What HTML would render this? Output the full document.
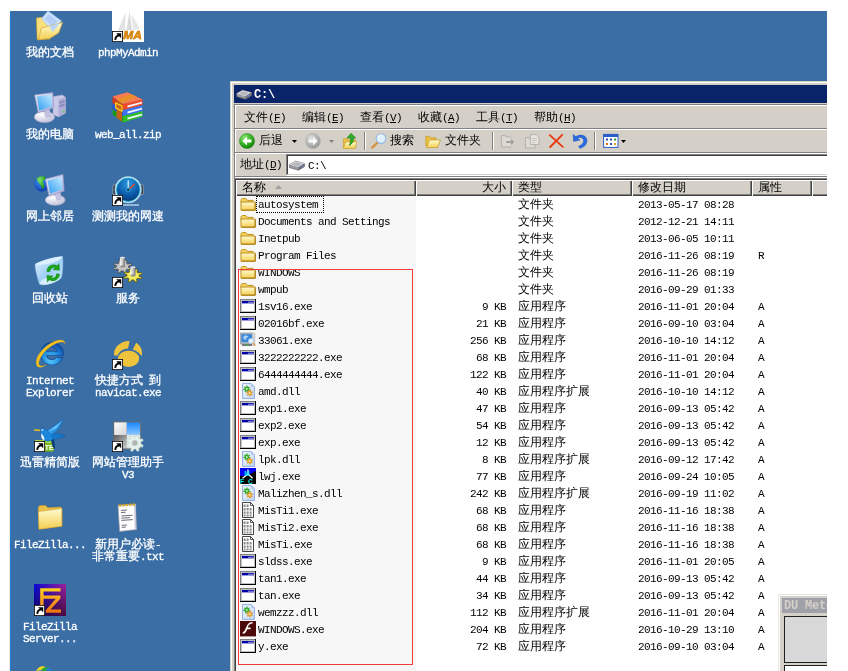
<!DOCTYPE html>
<html lang="zh-CN"><head><meta charset="utf-8"><title>C:\</title><style>
html,body{margin:0;padding:0;background:#fff}
body{width:848px;height:671px;overflow:hidden;position:relative;font-family:"Liberation Mono","WenQuanYi Zen Hei",monospace;font-size:12px;line-height:13px;color:#000}
.l{font-size:11px;letter-spacing:-0.6px}
#desk{position:absolute;left:10px;top:11px;width:817px;height:660px;background:#3a6ea5;overflow:hidden}
#o{position:absolute;left:-10px;top:-11px;width:848px;height:671px;will-change:transform}
#o div,#o svg,#o span.a{position:absolute}
.di{width:32px;height:32px}
.dl{width:90px;text-align:center;color:#fff;white-space:nowrap;-webkit-text-stroke:.3px #fff}
#win{left:230px;top:81px;width:640px;height:640px;background:#d4d0c8}
.ln{height:1px;left:0;right:0}
.t{white-space:nowrap;height:13px}
.hd{top:180px;height:16px;background:#d4d0c8;box-shadow:inset 1px 1px 0 #fff,inset -1px -1px 0 #404040,inset -2px -2px 0 #808080}
.r{left:236px;width:600px;height:17px}
.r div{top:3px;white-space:nowrap;height:13px}
.r svg{left:4px;top:0;width:16px;height:16px}
.n{left:22px}.s{right:330px;text-align:right}.y{left:282px}.d{left:402px}.at{left:522px}
.mi{top:112px;height:13px;white-space:nowrap}
.tb{top:135px;height:13px;white-space:nowrap}
u{text-decoration:underline}
</style></head>
<body><div style="position:absolute;left:9px;top:12px;width:1px;height:659px;background:#f3ebe4"></div><div id="desk"><div id="o">
<svg width="0" height="0" style="left:0;top:0"><defs>
<linearGradient id="gFo" x1="0" y1="0" x2="0" y2="1"><stop offset="0" stop-color="#fffbd2"/><stop offset="1" stop-color="#f4cf52"/></linearGradient>
<linearGradient id="gSc" x1="0" y1="1" x2="1" y2="0"><stop offset="0" stop-color="#2f9df2"/><stop offset="1" stop-color="#c4eaff"/></linearGradient>
<linearGradient id="gFr" x1="0" y1="0" x2="1" y2="1"><stop offset="0" stop-color="#e6e6f6"/><stop offset="1" stop-color="#a9a9d4"/></linearGradient>
<radialGradient id="gBa" cx="0.35" cy="0.3" r="0.8"><stop offset="0" stop-color="#ffffff"/><stop offset="1" stop-color="#b9b9d6"/></radialGradient>
<radialGradient id="gGl" cx="0.4" cy="0.3" r="0.8"><stop offset="0" stop-color="#3a9bf0"/><stop offset="1" stop-color="#0a2ea8"/></radialGradient>
<radialGradient id="gGr" cx="0.35" cy="0.3" r="0.7"><stop offset="0" stop-color="#7fe06a"/><stop offset="1" stop-color="#17920f"/></radialGradient>
<radialGradient id="gGy" cx="0.35" cy="0.3" r="0.7"><stop offset="0" stop-color="#f4f4f4"/><stop offset="1" stop-color="#a4a4a4"/></radialGradient>
<radialGradient id="gCl" cx="0.5" cy="0.25" r="0.8"><stop offset="0" stop-color="#2d9be0"/><stop offset="0.6" stop-color="#0b5aa8"/><stop offset="1" stop-color="#06356e"/></radialGradient>
<radialGradient id="gIe" cx="0.45" cy="0.75" r="0.8"><stop offset="0" stop-color="#5fd2ff"/><stop offset="0.5" stop-color="#1c86dc"/><stop offset="1" stop-color="#0c3c9c"/></radialGradient>
<linearGradient id="gBn" x1="0" y1="0" x2="1" y2="1"><stop offset="0" stop-color="#e4f3ff"/><stop offset="0.5" stop-color="#9fd0f6"/><stop offset="1" stop-color="#c8e6fb"/></linearGradient>
<linearGradient id="gFzH" x1="0" y1="0" x2="1" y2="0"><stop offset="0" stop-color="#0a0ad8"/><stop offset="1" stop-color="#a0209c"/></linearGradient>
<linearGradient id="gFzV" x1="0" y1="0" x2="0" y2="1"><stop offset="0" stop-color="#000" stop-opacity="0"/><stop offset="1" stop-color="#200010" stop-opacity="0.65"/></linearGradient>
<linearGradient id="gFzT" x1="0" y1="0" x2="0" y2="1"><stop offset="0" stop-color="#ffd020"/><stop offset="1" stop-color="#f07010"/></linearGradient>
<linearGradient id="gCy" x1="0" y1="0" x2="1" y2="0"><stop offset="0" stop-color="#fafafa"/><stop offset="0.5" stop-color="#c8c8c8"/><stop offset="1" stop-color="#707070"/></linearGradient>
<linearGradient id="gWb" x1="0" y1="0" x2="0" y2="1"><stop offset="0" stop-color="#1888ff"/><stop offset="1" stop-color="#8cc8ff"/></linearGradient>
<linearGradient id="gWg" x1="0" y1="0" x2="1" y2="1"><stop offset="0" stop-color="#5c5c5c"/><stop offset="1" stop-color="#d0d0d0"/></linearGradient>
<linearGradient id="gWw" x1="0" y1="0" x2="1" y2="1"><stop offset="0" stop-color="#ffffff"/><stop offset="1" stop-color="#d2d2d2"/></linearGradient>
<linearGradient id="gPg" x1="0" y1="0" x2="1" y2="1"><stop offset="0" stop-color="#f4f9ff"/><stop offset="1" stop-color="#c4d8f8"/></linearGradient>
<radialGradient id="gBk" cx="0.35" cy="0.3" r="0.75"><stop offset="0" stop-color="#8fe87a"/><stop offset="0.6" stop-color="#2fae1f"/><stop offset="1" stop-color="#157a0c"/></radialGradient>
<radialGradient id="gFw" cx="0.35" cy="0.3" r="0.75"><stop offset="0" stop-color="#e0e0e0"/><stop offset="1" stop-color="#969696"/></radialGradient>
</defs></svg>
<div style="left:10px;top:11px;width:1px;height:660px;background:#1e7ed6"></div>
<svg class="di" style="left:34px;top:10px" viewBox="0 0 32 32"><path d="M2.5 8.2L7 7.2L11.5 9.5L16 9.5L16 29L3.2 29.6Z" fill="#f9de7c" stroke="#d9a42c" stroke-width=".7"/><path d="M14 1L27.5 11L19 21.5L7.5 8.5Z" fill="#cfe2fb" stroke="#9bbdf0" stroke-width=".6"/><path d="M14.5 4L23.5 11L18.5 17L10.5 9Z" fill="#a9c9f6" opacity=".8"/><path d="M7.3 18L28.6 12.5L24.6 23L16.5 28L4.3 30Z" fill="url(#gFo)" stroke="#d3a534" stroke-width=".7"/><path d="M15.5 16L26 13.3L18.5 22Z" fill="#b8d6f8"/></svg>
<div class="dl" style="left:5px;top:47px">我的文档</div>
<svg class="di" style="left:112px;top:10px" viewBox="0 0 32 32"><rect width="32" height="32" fill="#fff"/><path d="M13.5 2L6 20.5L13 20.5Z" fill="#e3e3e3"/><path d="M17.5 1L14.5 20.5L20 20Z" fill="#dadada"/><path d="M19.5 4L21 20L28 19Z" fill="#e6e6e6"/><text x="11.3" y="28.6" font-family="Liberation Sans,sans-serif" font-weight="bold" font-style="italic" font-size="11" textLength="18.5" lengthAdjust="spacingAndGlyphs" fill="#f39a00" stroke="#b56500" stroke-width=".5">MA</text><rect x="0" y="21" width="11" height="11" fill="#000"/><rect x=".8" y="21.8" width="9.4" height="9.4" fill="#fff"/><path d="M3.4 29.8C3.2 27.4 4.6 25.8 7 25.6" fill="none" stroke="#000" stroke-width="2"/><path d="M4.2 23.2H9.2V28.2Z" fill="#000"/></svg>
<div class="dl" style="left:83px;top:47px"><span class="l">phpMyAdmin</span></div>
<svg class="di" style="left:34px;top:92px" viewBox="0 0 32 32"><ellipse cx="10.5" cy="25" rx="10.3" ry="5.6" fill="url(#gBa)" stroke="#a9a9c9" stroke-width=".5"/><path d="M19 4.5L28.5 3L31.6 5.2L31.6 21L24.5 25L19 22.5Z" fill="#c9c9e6" stroke="#9a9ac6" stroke-width=".5"/><path d="M24.5 7.5L31.6 5.2L31.6 21L24.5 25Z" fill="#aeaed6"/><path d="M25.5 9.5L30.6 8L30.6 10.5L25.5 12ZM25.5 13L30.6 11.5L30.6 14L25.5 15.5Z" fill="#8d8dc0"/><circle cx="29.8" cy="19.6" r=".9" fill="#4be024"/><path d="M10 17.5L15.5 16L16.5 24.5L12 25.5Z" fill="#c4c4e2" stroke="#a2a2ca" stroke-width=".4"/><path d="M.6 3L18.8 .6L19.8 15.8L4.2 20.6Z" fill="url(#gFr)" stroke="#9c9cc8" stroke-width=".6"/><path d="M3 4.6L17.4 2.6L18.2 14.4L5.2 18.4Z" fill="url(#gSc)"/></svg>
<div class="dl" style="left:5px;top:129px">我的电脑</div>
<svg class="di" style="left:112px;top:92px" viewBox="0 0 32 32"><path d="M.5 17L11 24L11 30.5L.5 22.5Z" fill="#1c9a18"/><path d="M11 24L30.6 19L30.6 24.6L11 30.5Z" fill="#2fc028"/><path d="M15.5 25.6L30 21.7L30 23.4L15.5 27.6Z" fill="#eef4ff"/><path d="M.5 11L11 18L11 24L.5 17Z" fill="#2a55d0"/><path d="M11 18L30.6 13L30.6 19L11 24Z" fill="#3f73ee"/><path d="M15.5 19.6L30 15.7L30 17.4L15.5 21.6Z" fill="#eef4ff"/><path d="M.5 4.6L11 12L11 18L.5 11Z" fill="#d23a1c"/><path d="M11 12L30.6 7.6L30.6 13L11 18Z" fill="#f04a26"/><path d="M15.5 13.6L30 9.8L30 11.5L15.5 15.6Z" fill="#eef4ff"/><path d="M.5 4.6L15.5 .3L30.6 7.6L11 12Z" fill="#fb7a52"/><path d="M4.5 7.2L10 11.2L10 29.8L4.5 25.6Z" fill="#c0601c"/><path d="M4.5 7.2L19 2.2L24.5 4.4L10 11.2Z" fill="#e8902c"/><path d="M3.6 11L10 14L10 19.2L3.6 15.8Z" fill="#c8641c" stroke="#ffd21e" stroke-width="1.2"/></svg>
<div class="dl" style="left:83px;top:129px"><span class="l">web_all.zip</span></div>
<svg class="di" style="left:34px;top:174px" viewBox="0 0 32 32"><circle cx="7.8" cy="10" r="7.6" fill="url(#gGl)"/><path d="M2.5 4.5C5 1.8 9.5 1.6 12 3.2C11 6 9.2 6.6 8.6 8.6C10.4 10.2 11 12.6 9.2 15.6C8.4 13.4 7 12.6 6.4 10.4C4.6 9 3 7 2.5 4.5Z" fill="url(#gGr)"/><ellipse cx="21.2" cy="26" rx="10" ry="5.4" fill="url(#gBa)" stroke="#a9a9c9" stroke-width=".5"/><path d="M21 19.5L26.5 18L27 25L23.2 26.4Z" fill="#c4c4e2" stroke="#a2a2ca" stroke-width=".4"/><path d="M11.4 5.2L29 .4L30.2 17L15 22Z" fill="url(#gFr)" stroke="#9c9cc8" stroke-width=".6"/><path d="M13.6 6.8L27.6 2.8L28.6 15.6L16.2 19.6Z" fill="url(#gSc)"/></svg>
<div class="dl" style="left:5px;top:211px">网上邻居</div>
<svg class="di" style="left:112px;top:174px" viewBox="0 0 32 32"><rect x="9" y="30.4" width="18" height="1.2" fill="#cfe4f4"/><rect x=".8" y="11" width="3.6" height="9.5" rx="1.2" fill="#3c4650" stroke="#c4ccd4" stroke-width=".5"/><rect x="28" y="11" width="3.6" height="9.5" rx="1.2" fill="#3c4650" stroke="#c4ccd4" stroke-width=".5"/><circle cx="16.2" cy="15.7" r="13.2" fill="#d8eefa" stroke="#9cc8e4" stroke-width=".6"/><circle cx="16.2" cy="15.7" r="11.7" fill="url(#gCl)" stroke="#18b4d8" stroke-width=".8"/><path d="M16.2 15.7L16.2 6.2" stroke="#fff" stroke-width="1"/><path d="M16.2 15.7L22.8 10" stroke="#f2421c" stroke-width="1.3"/><circle cx="16.2" cy="15.7" r="1.7" fill="#102840" stroke="#38c8ff" stroke-width=".8"/><rect x="0" y="21" width="11" height="11" fill="#000"/><rect x=".8" y="21.8" width="9.4" height="9.4" fill="#fff"/><path d="M3.4 29.8C3.2 27.4 4.6 25.8 7 25.6" fill="none" stroke="#000" stroke-width="2"/><path d="M4.2 23.2H9.2V28.2Z" fill="#000"/></svg>
<div class="dl" style="left:83px;top:211px">测测我的网速</div>
<svg class="di" style="left:34px;top:256px" viewBox="0 0 32 32"><path d="M1 8.2C6 5.6 20 .6 28.6 .6C29.4 6 28.6 17 27.6 21C26 25.6 12 30 5.6 28.6C3.6 23 1.2 14 1 8.2Z" fill="url(#gBn)" stroke="#8ab4d8" stroke-width=".6"/><path d="M1 8.2C6 5.6 20 .6 28.6 .6C27 5.6 9 10.6 1 8.2Z" fill="#def0ff"/><ellipse cx="15.5" cy="24.4" rx="10" ry="3.4" fill="#e2f2ff" opacity=".8" transform="rotate(-16 15.5 24.4)"/><g transform="translate(19.2 16.8) scale(1.3) translate(-19.1 -16.6)"><path d="M14.2 15.6A5.2 5.2 0 0 1 22.2 11.2L23.6 9.4L24 14.6L19 14.2L20.6 12.8A3 3 0 0 0 16.6 15.8ZM24 17.6A5.2 5.2 0 0 1 16 22L14.6 23.8L14.2 18.6L19.2 19L17.6 20.4A3 3 0 0 0 21.6 17.4Z" fill="#1aa41a" stroke="#0c7c0c" stroke-width=".3"/></g></svg>
<div class="dl" style="left:5px;top:293px">回收站</div>
<svg class="di" style="left:112px;top:256px" viewBox="0 0 32 32"><path d="M16.58 11.39L19.43 12.61L18.50 14.06L15.35 13.28L13.93 14.22L14.74 16.54L12.66 17.09L11.21 14.93L9.27 14.88L7.56 16.93L5.56 16.26L6.64 14.00L5.33 12.97L2.11 13.55L1.35 12.06L4.34 11.01L4.42 9.61L1.57 8.39L2.50 6.94L5.65 7.72L7.07 6.78L6.26 4.46L8.34 3.91L9.79 6.07L11.73 6.12L13.44 4.07L15.44 4.74L14.36 7.00L15.67 8.03L18.89 7.45L19.65 8.94L16.66 9.99Z" fill="#c4c4c4" stroke="#484848" stroke-width="0.8"/><rect x="8" y="1.6" width="5" height="9" fill="url(#gCy)"/><ellipse cx="10.5" cy="1.8" rx="2.5" ry="1" fill="#f0f0f0" stroke="#909090" stroke-width=".3"/><ellipse cx="10.5" cy="10.6" rx="2.5" ry="1" fill="#8c8c8c"/><path d="M27.08 20.39L29.93 21.61L29.00 23.06L25.85 22.28L24.43 23.22L25.24 25.54L23.16 26.09L21.71 23.93L19.77 23.88L18.06 25.93L16.06 25.26L17.14 23.00L15.83 21.97L12.61 22.55L11.85 21.06L14.84 20.01L14.92 18.61L12.07 17.39L13.00 15.94L16.15 16.72L17.57 15.78L16.76 13.46L18.84 12.91L20.29 15.07L22.23 15.12L23.94 13.07L25.94 13.74L24.86 16.00L26.17 17.03L29.39 16.45L30.15 17.94L27.16 18.99Z" fill="#f2ec5c" stroke="#5c5400" stroke-width="0.8"/><rect x="18.5" y="11" width="5" height="8.6" fill="url(#gCy)"/><ellipse cx="21" cy="11.2" rx="2.5" ry="1" fill="#f0f0f0" stroke="#909090" stroke-width=".3"/><ellipse cx="21" cy="19.6" rx="2.5" ry="1" fill="#8c8c8c"/><rect x="0" y="21" width="11" height="11" fill="#000"/><rect x=".8" y="21.8" width="9.4" height="9.4" fill="#fff"/><path d="M3.4 29.8C3.2 27.4 4.6 25.8 7 25.6" fill="none" stroke="#000" stroke-width="2"/><path d="M4.2 23.2H9.2V28.2Z" fill="#000"/></svg>
<div class="dl" style="left:83px;top:293px">服务</div>
<svg class="di" style="left:34px;top:338px" viewBox="0 0 32 32"><path d="M17.9 4.2A11.5 11.5 0 1 0 28.9 19.4L22.6 19.4A5.6 5.6 0 0 1 12.4 17.4L29.3 17.4A11.5 11.5 0 0 0 17.9 4.2ZM12.4 13.2A5.6 5.6 0 0 1 23.2 13.2Z" fill="url(#gIe)" stroke="#0a2a78" stroke-width=".5"/><path d="M3.2 28.2C-1 22 8 8 21 3.2C27 1 31.6 2 30.8 6.2C31 3.6 27 3.4 22 5.6C11 10.4 3.6 21.6 5 26.6C5.6 28.6 8.6 28.4 12.6 26.4C8.6 29.4 4.8 30.2 3.2 28.2Z" fill="#f6c21c" stroke="#d89a0c" stroke-width=".3"/></svg>
<div class="dl" style="left:5px;top:375px"><span class="l">Internet</span></div>
<div class="dl" style="left:5px;top:387px"><span class="l">Explorer</span></div>
<svg class="di" style="left:112px;top:338px" viewBox="0 0 32 32"><path d="M2.2 17.4C1 10 8 2.8 17.6 3L16 10.4C11 10.6 7.4 13 5.6 17.6Z" fill="#f0c33c"/><path d="M24.2 4.8C28.6 7.6 31 12.6 29.6 18.2C27.6 15 25 13 20.8 11.6Z" fill="#f0c33c"/><ellipse cx="16.6" cy="20.8" rx="10.6" ry="8.1" fill="#f0c33c"/><rect x="0" y="21" width="11" height="11" fill="#000"/><rect x=".8" y="21.8" width="9.4" height="9.4" fill="#fff"/><path d="M3.4 29.8C3.2 27.4 4.6 25.8 7 25.6" fill="none" stroke="#000" stroke-width="2"/><path d="M4.2 23.2H9.2V28.2Z" fill="#000"/></svg>
<div class="dl" style="left:83px;top:375px">快捷方式<span class="l">&nbsp;</span>到</div>
<div class="dl" style="left:83px;top:387px"><span class="l">navicat.exe</span></div>
<svg class="di" style="left:34px;top:420px" viewBox="0 0 32 32"><rect x=".6" y="20" width="19" height="11.4" rx="1.5" fill="#78b81c"/><rect x=".6" y="20" width="19" height="3" rx="1.5" fill="#a4d840"/><text x="10.8" y="29.6" font-family="Liberation Sans,sans-serif" font-weight="bold" font-size="7" fill="#fff">TE</text><path d="M16.5 18L20 18.6L21.2 29.4L18.4 26Z" fill="#0c3c78"/><path d="M-.2 9.3L6.6 9.8L6.6 11.2L-.2 10.5Z" fill="#f4cc30" stroke="#c89c10" stroke-width=".3"/><path d="M15 14L24 13.2L31.6 16.6L22.4 18.8L17 19.4Z" fill="#1478cc" stroke="#0c549c" stroke-width=".4"/><path d="M10.5 12.5L29.6 -.6L24.6 8.4L17 15.4Z" fill="#2c98e8" stroke="#0c5cb0" stroke-width=".4"/><path d="M13 12.5L28 .8L22 8.6Z" fill="#6cc0fa"/><path d="M6.2 11.4C6 8.6 8.6 7.4 10.6 8.4C12.6 9.6 14.4 11.6 16 13.4L19.4 18C18.6 20.4 16.4 21.4 13 21.2C10 21 8 19.4 7.4 17Z" fill="#1c86dc" stroke="#0c549c" stroke-width=".4"/><path d="M7.2 13.6C9.4 15 10.6 17.6 10.4 20.4C8.6 19.6 7.6 18.4 7.3 17Z" fill="#eef6ff"/><circle cx="8.4" cy="10" r=".9" fill="#fff"/><circle cx="8.5" cy="10" r=".4" fill="#102040"/><rect x="0" y="21" width="11" height="11" fill="#000"/><rect x=".8" y="21.8" width="9.4" height="9.4" fill="#fff"/><path d="M3.4 29.8C3.2 27.4 4.6 25.8 7 25.6" fill="none" stroke="#000" stroke-width="2"/><path d="M4.2 23.2H9.2V28.2Z" fill="#000"/></svg>
<div class="dl" style="left:5px;top:457px">迅雷精简版</div>
<svg class="di" style="left:112px;top:420px" viewBox="0 0 32 32"><rect x="1.2" y="1.4" width="28" height="28" fill="#6a6a6a"/><rect x="2.2" y="2.4" width="12.6" height="12.6" fill="url(#gWw)"/><rect x="14.8" y="2.4" width="13.4" height="12.6" fill="url(#gWb)"/><rect x="2.2" y="15" width="12.6" height="13.4" fill="url(#gWg)"/><rect x="14.8" y="15" width="13.4" height="13.4" fill="#e6e6e6"/><path d="M28.93 23.93L31.29 25.33L30.51 27.25L27.84 26.61L26.48 27.99L27.15 30.65L25.25 31.45L23.81 29.12L21.87 29.13L20.47 31.49L18.55 30.71L19.19 28.04L17.81 26.68L15.15 27.35L14.35 25.45L16.68 24.01L16.67 22.07L14.31 20.67L15.09 18.75L17.76 19.39L19.12 18.01L18.45 15.35L20.35 14.55L21.79 16.88L23.73 16.87L25.13 14.51L27.05 15.29L26.41 17.96L27.79 19.32L30.45 18.65L31.25 20.55L28.92 21.99Z" fill="#e4f2ee" stroke="#b4ccc6" stroke-width="0.5"/><circle cx="22.8" cy="23" r="3" fill="#b4b4b4" stroke="#d4e0dc" stroke-width=".6"/><rect x="0" y="21" width="11" height="11" fill="#000"/><rect x=".8" y="21.8" width="9.4" height="9.4" fill="#fff"/><path d="M3.4 29.8C3.2 27.4 4.6 25.8 7 25.6" fill="none" stroke="#000" stroke-width="2"/><path d="M4.2 23.2H9.2V28.2Z" fill="#000"/></svg>
<div class="dl" style="left:83px;top:457px">网站管理助手</div>
<div class="dl" style="left:83px;top:469px"><span class="l">V3</span></div>
<svg class="di" style="left:34px;top:502px" viewBox="0 0 32 32"><path d="M4.2 6.4C4.2 4.6 5.2 3.8 6.6 3.6L11.6 3.4L14 5.8L26.6 5L28 6.4L28 24L5 27.2Z" fill="#e8bf48" stroke="#c4962a" stroke-width=".6"/><path d="M4.4 9.6L27.8 6.6L27.8 24.2L5 27.2Z" fill="url(#gFo)" stroke="#d3a534" stroke-width=".6"/></svg>
<div class="dl" style="left:5px;top:539px"><span class="l">FileZilla...</span></div>
<svg class="di" style="left:112px;top:502px" viewBox="0 0 32 32"><path d="M6 3.2L23.6 2.2L24.4 27.6L7.6 29.4Z" fill="#fdfdfd" stroke="#9a9aa8" stroke-width=".7"/><path d="M22 2.6L23.6 2.2L24.4 27.6L22.8 27.8Z" fill="#c8c8d8"/><path d="M7 2.4h2v2h-2zM10.4 2.2h2v2h-2zM13.8 2h2v2h-2zM17.2 1.8h2v2h-2zM20.6 1.6h2v2h-2z" fill="#e8b820" stroke="#a88010" stroke-width=".3"/><path d="M9 8.4L15 8M9 10.6L13.6 10.2M9.4 14L20.6 13.2M9.4 16.2L18 15.6M9.4 18.4L20.8 17.6M9.8 23.4L15 23M9.8 25.4L13.8 25.1" stroke="#6c6c78" stroke-width="1"/></svg>
<div class="dl" style="left:83px;top:539px">新用户必读<span class="l">-</span></div>
<div class="dl" style="left:83px;top:551px">非常重要<span class="l">.txt</span></div>
<svg class="di" style="left:34px;top:584px" viewBox="0 0 32 32"><rect width="32" height="32" fill="url(#gFzH)"/><rect width="32" height="32" fill="url(#gFzV)"/><path d="M6.2 28.6L6.2 4.2L26.6 4.2L26.6 7.4L9.6 7.4L9.6 11.6L26.4 11.6L26.4 14.6L16.6 25.6L27 25.6L27 28.8L11.8 28.8L11.8 26.2L21.8 14.8L9.6 14.8L9.6 28.6Z" fill="url(#gFzT)"/><rect x="0" y="21" width="11" height="11" fill="#000"/><rect x=".8" y="21.8" width="9.4" height="9.4" fill="#fff"/><path d="M3.4 29.8C3.2 27.4 4.6 25.8 7 25.6" fill="none" stroke="#000" stroke-width="2"/><path d="M4.2 23.2H9.2V28.2Z" fill="#000"/></svg>
<div class="dl" style="left:5px;top:621px"><span class="l">FileZilla</span></div>
<div class="dl" style="left:5px;top:633px"><span class="l">Server...</span></div>
<svg class="di" style="left:34px;top:666px" viewBox="0 0 32 32"><path d="M2 5C4 1 8 -.5 11 .8L9 4Z" fill="#e8d820"/><path d="M7 4C9 1.4 13 .4 17 2.4L12 6Z" fill="#28a838"/><path d="M12 3L16 1.6L18 5L13 6Z" fill="#2878d8"/></svg>
<div id="win"></div>
<div style="left:231px;top:82px;width:640px;height:640px;background:#fff"></div>
<div style="left:232px;top:83px;width:640px;height:640px;background:#d4d0c8"></div>
<div style="left:234px;top:85px;width:640px;height:18px;background:#0a246a"></div>
<svg style="left:236px;top:86px;width:16px;height:16px" viewBox="0 0 16 16"><path d="M.6 7.6L6.6 4.2L15.4 6.6L15.4 9.6L9.4 13.2L.6 10.6Z" fill="#9c9ca4" stroke="#5c6068" stroke-width=".7"/><path d="M.6 7.6L6.6 4.2L15.4 6.6L9.4 10.2Z" fill="#d4d4d8"/><path d="M9.4 10.2L15.4 6.6L15.4 9.6L9.4 13.2Z" fill="#70707a"/><path d="M3 7.6L6.8 5.4L12.6 7L8.8 9.2Z" fill="#b4b4bc"/><rect x="11.6" y="9.2" width="2" height="1" fill="#6c8cd8" transform="rotate(-32 12.6 9.7)"/></svg>
<div class="t" style="left:254px;top:89px;color:#fff;font-weight:bold;font-size:12px;letter-spacing:-0.2px">C:\</div>
<div style="left:234px;top:104px;width:640px;height:1px;background:#808080"></div>
<div style="left:234px;top:105px;width:640px;height:1px;background:#fff"></div>
<div style="left:234px;top:104px;width:1px;height:74px;background:#808080"></div>
<div style="left:235px;top:105px;width:1px;height:72px;background:#fff"></div>
<div class="mi" style="left:244px">文件<span class="l">(<u>F</u>)</span></div>
<div class="mi" style="left:302px">编辑<span class="l">(<u>E</u>)</span></div>
<div class="mi" style="left:360px">查看<span class="l">(<u>V</u>)</span></div>
<div class="mi" style="left:418px">收藏<span class="l">(<u>A</u>)</span></div>
<div class="mi" style="left:476px">工具<span class="l">(<u>T</u>)</span></div>
<div class="mi" style="left:534px">帮助<span class="l">(<u>H</u>)</span></div>
<div style="left:235px;top:128px;width:640px;height:1px;background:#808080"></div>
<div style="left:235px;top:129px;width:640px;height:1px;background:#fff"></div>
<div style="left:235px;top:152px;width:640px;height:1px;background:#808080"></div>
<div style="left:235px;top:153px;width:640px;height:1px;background:#fff"></div>
<div style="left:235px;top:176px;width:640px;height:1px;background:#808080"></div>
<div style="left:235px;top:177px;width:640px;height:1px;background:#fff"></div>
<svg style="left:239px;top:133px;width:16px;height:16px" viewBox="0 0 16 16"><circle cx="8" cy="8" r="7.6" fill="url(#gBk)" stroke="#2a8a1c" stroke-width=".5"/><path d="M3.4 8L8 3.6L8 6.4L12.4 6.4L12.4 9.6L8 9.6L8 12.4Z" fill="#fff"/></svg>
<div class="tb" style="left:259px">后退</div>
<svg style="left:292px;top:140px;width:5px;height:3px" viewBox="0 0 5 3"><path d="M0 0h5l-2.5 3z" fill="#000"/></svg>
<svg style="left:305px;top:133px;width:16px;height:16px" viewBox="0 0 16 16"><circle cx="8" cy="8" r="7.4" fill="url(#gFw)" stroke="#a4a4a4" stroke-width=".5"/><path d="M12.6 8L8 3.6L8 6.4L3.6 6.4L3.6 9.6L8 9.6L8 12.4Z" fill="#fafafa"/></svg>
<svg style="left:329px;top:140px;width:5px;height:3px" viewBox="0 0 5 3"><path d="M0 0h5l-2.5 3z" fill="#808080"/></svg>
<svg style="left:342px;top:133px;width:16px;height:16px" viewBox="0 0 16 16"><path d="M1.4 5.6L5.4 5.6L6.6 7L13.6 7L13.6 15L1.4 15Z" fill="#e9c146" stroke="#c39a22" stroke-width=".6"/><path d="M3.6 9L15 9L13 15.4L1.4 15.4Z" fill="url(#gFo)" stroke="#c39a22" stroke-width=".6"/><path d="M9 .4L13.8 5L11.4 5C11.4 8.6 10.6 10.6 7.2 12.4C8.6 9.6 8.6 8 8.4 5L5 5Z" fill="#2fae28" stroke="#127810" stroke-width=".6"/></svg>
<div style="left:364px;top:132px;width:1px;height:18px;background:#808080"></div>
<div style="left:365px;top:132px;width:1px;height:18px;background:#fff"></div>
<div style="left:492px;top:132px;width:1px;height:18px;background:#808080"></div>
<div style="left:493px;top:132px;width:1px;height:18px;background:#fff"></div>
<div style="left:594px;top:132px;width:1px;height:18px;background:#808080"></div>
<div style="left:595px;top:132px;width:1px;height:18px;background:#fff"></div>
<svg style="left:371px;top:133px;width:16px;height:16px" viewBox="0 0 16 16"><path d="M7 9L1.2 14.6" stroke="#d8903c" stroke-width="2.2" stroke-linecap="round"/><circle cx="10" cy="5.6" r="4.8" fill="#dff0ff" stroke="#9ab8e0" stroke-width="1.1"/><path d="M7.2 4.6A3 3 0 0 1 10 2.6" stroke="#fff" stroke-width="1" fill="none"/></svg>
<div class="tb" style="left:390px">搜索</div>
<svg style="left:425px;top:133px;width:16px;height:16px" viewBox="0 0 16 16"><path d="M.8 3.4L4.4 3.4L5.6 4.8L11 4.8L11 13L.8 13Z" fill="#e9c146" stroke="#c39a22" stroke-width=".7"/><path d="M4.4 7L15.4 7L12.6 14.6L1.6 14.6Z" fill="url(#gFo)" stroke="#c39a22" stroke-width=".7"/></svg>
<div class="tb" style="left:445px">文件夹</div>
<svg style="left:500px;top:133px;width:16px;height:16px" viewBox="0 0 16 16"><path d="M1.4 2.6L5 2.6L6.2 4L11 4L11 14L1.4 14Z" fill="#dcdad4" stroke="#a8a6a0" stroke-width=".8"/><path d="M5.6 7.4L10.4 7.4L10.4 5L15.4 9L10.4 13L10.4 10.6L5.6 10.6Z" fill="#a4a29c" stroke="#f4f4f0" stroke-width=".6"/></svg>
<svg style="left:524px;top:133px;width:16px;height:16px" viewBox="0 0 16 16"><path d="M1.4 4.6L5 4.6L6.2 6L11 6L11 15L1.4 15Z" fill="#dcdad4" stroke="#a8a6a0" stroke-width=".8"/><path d="M6.4 1.6L12.4 1.6L15 4.2L15 11.4L6.4 11.4Z" fill="#e8e6e0" stroke="#a8a6a0" stroke-width=".8"/><path d="M8 5.4L13 5.4M8 7.4L13 7.4M8 9.4L11 9.4" stroke="#b8b6b0" stroke-width=".7"/></svg>
<svg style="left:548px;top:133px;width:16px;height:16px" viewBox="0 0 16 16"><path d="M1.8 2.2L14.8 13.8M14.2 1.8L2.2 14" stroke="#e8380c" stroke-width="1.8" stroke-linecap="round"/></svg>
<svg style="left:572px;top:133px;width:16px;height:16px" viewBox="0 0 16 16"><path d="M1 1.4L1.6 8.4L8 7L5.6 5.2C8.4 3.4 11.8 5 11.6 8C11.4 10.6 9.4 12.2 6.6 13.2L8 15.4C12.4 14 15 11.4 15 7.6C15 2.6 8.6 .2 3.8 3.6Z" fill="#2a6ae0" stroke="#1448b0" stroke-width=".4"/></svg>
<svg style="left:603px;top:133px;width:16px;height:16px" viewBox="0 0 16 16"><rect x=".6" y="1.4" width="14.4" height="13" fill="#fff" stroke="#2a5cc8" stroke-width="1"/><rect x=".6" y="1.4" width="14.4" height="2.6" fill="#2a5cc8"/><path d="M3 5.6h2v2h-2zM7 5.6h2v2h-2z" fill="#2a4cb0"/><path d="M11 5.6h2v2h-2z" fill="#2ca02c"/><path d="M3 10h2v2h-2z" fill="#e07020"/><path d="M7 10h2v2h-2z" fill="#2a4cb0"/><path d="M11 10h2v2h-2z" fill="#e8a020"/></svg>
<svg style="left:621px;top:140px;width:5px;height:3px" viewBox="0 0 5 3"><path d="M0 0h5l-2.5 3z" fill="#000"/></svg>
<div class="t" style="left:240px;top:159px">地址<span class="l">(<u>D</u>)</span></div>
<div style="left:286px;top:154px;width:640px;height:22px;background:#808080"></div>
<div style="left:287px;top:155px;width:640px;height:20px;background:#404040"></div>
<div style="left:288px;top:156px;width:640px;height:18px;background:#fff"></div>
<div style="left:287px;top:174px;width:640px;height:1px;background:#d4d0c8"></div>
<div style="left:286px;top:175px;width:640px;height:1px;background:#fff"></div>
<svg style="left:289px;top:157px;width:16px;height:16px" viewBox="0 0 16 16"><path d="M.6 7.6L6.6 4.2L15.4 6.6L15.4 9.6L9.4 13.2L.6 10.6Z" fill="#9c9ca4" stroke="#5c6068" stroke-width=".7"/><path d="M.6 7.6L6.6 4.2L15.4 6.6L9.4 10.2Z" fill="#d4d4d8"/><path d="M9.4 10.2L15.4 6.6L15.4 9.6L9.4 13.2Z" fill="#70707a"/><path d="M3 7.6L6.8 5.4L12.6 7L8.8 9.2Z" fill="#b4b4bc"/><rect x="11.6" y="9.2" width="2" height="1" fill="#6c8cd8" transform="rotate(-32 12.6 9.7)"/></svg>
<div class="t" style="left:308px;top:160px"><span class="l">C:\</span></div>
<div style="left:234px;top:178px;width:640px;height:500px;background:#808080"></div>
<div style="left:235px;top:179px;width:640px;height:500px;background:#404040"></div>
<div style="left:236px;top:180px;width:640px;height:500px;background:#fff"></div>
<div style="left:236px;top:196px;width:180px;height:480px;background:#f7f7f7"></div>
<div class="hd" style="left:236px;width:180px"></div>
<div class="t" style="left:242px;top:182px">名称</div>
<div class="hd" style="left:416px;width:96px"></div>
<div class="t" style="left:416px;top:182px;width:90px;text-align:right">大小</div>
<div class="hd" style="left:512px;width:120px"></div>
<div class="t" style="left:518px;top:182px">类型</div>
<div class="hd" style="left:632px;width:120px"></div>
<div class="t" style="left:638px;top:182px">修改日期</div>
<div class="hd" style="left:752px;width:60px"></div>
<div class="t" style="left:758px;top:182px">属性</div>
<div class="hd" style="left:812px;width:88px"></div>
<svg style="left:275px;top:185px;width:7px;height:4px" viewBox="0 0 7 4"><path d="M0 4h7l-3.5-4z" fill="#a0a0a0"/></svg>
<div class="r" style="top:196px"><svg viewBox="0 0 16 16"><path d="M1 4.4C1 3.2 1.6 2.5 2.6 2.5L5.8 2.5L7.4 4.4L13 4.4L13 7L1 7Z" fill="#f3d260" stroke="#c0921c" stroke-width="1"/><path d="M1 6L15.2 6L15.2 14.2L1 14.2Z" fill="url(#gFo)" stroke="#c0921c" stroke-width="1"/><path d="M1.6 14.2L15.2 14.2L15.2 6.6" fill="none" stroke="#a87c14" stroke-width="1"/></svg><div class="n"><span class="l">autosystem</span></div><div class="y">文件夹</div><div class="d"><span class="l">2013-05-17&nbsp;08:28</span></div></div>
<div class="r" style="top:213px"><svg viewBox="0 0 16 16"><path d="M1 4.4C1 3.2 1.6 2.5 2.6 2.5L5.8 2.5L7.4 4.4L13 4.4L13 7L1 7Z" fill="#f3d260" stroke="#c0921c" stroke-width="1"/><path d="M1 6L15.2 6L15.2 14.2L1 14.2Z" fill="url(#gFo)" stroke="#c0921c" stroke-width="1"/><path d="M1.6 14.2L15.2 14.2L15.2 6.6" fill="none" stroke="#a87c14" stroke-width="1"/></svg><div class="n"><span class="l">Documents&nbsp;and&nbsp;Settings</span></div><div class="y">文件夹</div><div class="d"><span class="l">2012-12-21&nbsp;14:11</span></div></div>
<div class="r" style="top:230px"><svg viewBox="0 0 16 16"><path d="M1 4.4C1 3.2 1.6 2.5 2.6 2.5L5.8 2.5L7.4 4.4L13 4.4L13 7L1 7Z" fill="#f3d260" stroke="#c0921c" stroke-width="1"/><path d="M1 6L15.2 6L15.2 14.2L1 14.2Z" fill="url(#gFo)" stroke="#c0921c" stroke-width="1"/><path d="M1.6 14.2L15.2 14.2L15.2 6.6" fill="none" stroke="#a87c14" stroke-width="1"/></svg><div class="n"><span class="l">Inetpub</span></div><div class="y">文件夹</div><div class="d"><span class="l">2013-06-05&nbsp;10:11</span></div></div>
<div class="r" style="top:247px"><svg viewBox="0 0 16 16"><path d="M1 4.4C1 3.2 1.6 2.5 2.6 2.5L5.8 2.5L7.4 4.4L13 4.4L13 7L1 7Z" fill="#f3d260" stroke="#c0921c" stroke-width="1"/><path d="M1 6L15.2 6L15.2 14.2L1 14.2Z" fill="url(#gFo)" stroke="#c0921c" stroke-width="1"/><path d="M1.6 14.2L15.2 14.2L15.2 6.6" fill="none" stroke="#a87c14" stroke-width="1"/></svg><div class="n"><span class="l">Program&nbsp;Files</span></div><div class="y">文件夹</div><div class="d"><span class="l">2016-11-26&nbsp;08:19</span></div><div class="at"><span class="l">R</span></div></div>
<div class="r" style="top:264px"><svg viewBox="0 0 16 16"><path d="M1 4.4C1 3.2 1.6 2.5 2.6 2.5L5.8 2.5L7.4 4.4L13 4.4L13 7L1 7Z" fill="#f3d260" stroke="#c0921c" stroke-width="1"/><path d="M1 6L15.2 6L15.2 14.2L1 14.2Z" fill="url(#gFo)" stroke="#c0921c" stroke-width="1"/><path d="M1.6 14.2L15.2 14.2L15.2 6.6" fill="none" stroke="#a87c14" stroke-width="1"/></svg><div class="n"><span class="l">WINDOWS</span></div><div class="y">文件夹</div><div class="d"><span class="l">2016-11-26&nbsp;08:19</span></div></div>
<div class="r" style="top:281px"><svg viewBox="0 0 16 16"><path d="M1 4.4C1 3.2 1.6 2.5 2.6 2.5L5.8 2.5L7.4 4.4L13 4.4L13 7L1 7Z" fill="#f3d260" stroke="#c0921c" stroke-width="1"/><path d="M1 6L15.2 6L15.2 14.2L1 14.2Z" fill="url(#gFo)" stroke="#c0921c" stroke-width="1"/><path d="M1.6 14.2L15.2 14.2L15.2 6.6" fill="none" stroke="#a87c14" stroke-width="1"/></svg><div class="n"><span class="l">wmpub</span></div><div class="y">文件夹</div><div class="d"><span class="l">2016-09-29&nbsp;01:33</span></div></div>
<div class="r" style="top:298px"><svg viewBox="0 0 16 16"><rect x="0" y="1" width="16" height="14" fill="#000"/><rect x="0" y="1" width="15" height="13" fill="#808080"/><rect x="1" y="2" width="14" height="12" fill="#c0c0c0"/><rect x="2" y="3" width="12" height="10" fill="#fff"/><rect x="2" y="3" width="12" height="2.4" fill="#0000a8"/><path d="M8.4 3.8h1.2v1h-1.2zM10.4 3.8h1.2v1h-1.2zM12.4 3.8h1.2v1h-1.2z" fill="#fff"/></svg><div class="n"><span class="l">1sv16.exe</span></div><div class="s"><span class="l">9&nbsp;KB</span></div><div class="y">应用程序</div><div class="d"><span class="l">2016-11-01&nbsp;20:04</span></div><div class="at"><span class="l">A</span></div></div>
<div class="r" style="top:315px"><svg viewBox="0 0 16 16"><rect x="0" y="1" width="16" height="14" fill="#000"/><rect x="0" y="1" width="15" height="13" fill="#808080"/><rect x="1" y="2" width="14" height="12" fill="#c0c0c0"/><rect x="2" y="3" width="12" height="10" fill="#fff"/><rect x="2" y="3" width="12" height="2.4" fill="#0000a8"/><path d="M8.4 3.8h1.2v1h-1.2zM10.4 3.8h1.2v1h-1.2zM12.4 3.8h1.2v1h-1.2z" fill="#fff"/></svg><div class="n"><span class="l">02016bf.exe</span></div><div class="s"><span class="l">21&nbsp;KB</span></div><div class="y">应用程序</div><div class="d"><span class="l">2016-09-10&nbsp;03:04</span></div><div class="at"><span class="l">A</span></div></div>
<div class="r" style="top:332px"><svg viewBox="0 0 16 16"><rect x="0" y="1" width="14" height="11" fill="#b8bcc4" stroke="#808890" stroke-width=".6"/><rect x="1.4" y="2.2" width="10.6" height="8" fill="#3c86d8"/><path d="M3.4 4.4C5 3 8 3.4 8.6 5.4C7 5 5.4 6.4 6.4 8C4.4 8 2.8 6.4 3.4 4.4Z" fill="#a8d0f8"/><rect x="12.4" y="1" width="3" height="13" fill="#d0d0d0"/><rect x="2" y="12" width="10" height="2" fill="#787878"/><rect x="5.6" y="12.4" width="2.6" height="1" fill="#38c038"/><circle cx="11" cy="9" r="2.6" fill="#e4f4ff" stroke="#a8c8e8" stroke-width=".7"/><path d="M12.8 11L15.2 13.6" stroke="#e89838" stroke-width="1.4"/></svg><div class="n"><span class="l">33061.exe</span></div><div class="s"><span class="l">256&nbsp;KB</span></div><div class="y">应用程序</div><div class="d"><span class="l">2016-10-10&nbsp;14:12</span></div><div class="at"><span class="l">A</span></div></div>
<div class="r" style="top:349px"><svg viewBox="0 0 16 16"><rect x="0" y="1" width="16" height="14" fill="#000"/><rect x="0" y="1" width="15" height="13" fill="#808080"/><rect x="1" y="2" width="14" height="12" fill="#c0c0c0"/><rect x="2" y="3" width="12" height="10" fill="#fff"/><rect x="2" y="3" width="12" height="2.4" fill="#0000a8"/><path d="M8.4 3.8h1.2v1h-1.2zM10.4 3.8h1.2v1h-1.2zM12.4 3.8h1.2v1h-1.2z" fill="#fff"/></svg><div class="n"><span class="l">3222222222.exe</span></div><div class="s"><span class="l">68&nbsp;KB</span></div><div class="y">应用程序</div><div class="d"><span class="l">2016-11-01&nbsp;20:04</span></div><div class="at"><span class="l">A</span></div></div>
<div class="r" style="top:366px"><svg viewBox="0 0 16 16"><rect x="0" y="1" width="16" height="14" fill="#000"/><rect x="0" y="1" width="15" height="13" fill="#808080"/><rect x="1" y="2" width="14" height="12" fill="#c0c0c0"/><rect x="2" y="3" width="12" height="10" fill="#fff"/><rect x="2" y="3" width="12" height="2.4" fill="#0000a8"/><path d="M8.4 3.8h1.2v1h-1.2zM10.4 3.8h1.2v1h-1.2zM12.4 3.8h1.2v1h-1.2z" fill="#fff"/></svg><div class="n"><span class="l">6444444444.exe</span></div><div class="s"><span class="l">122&nbsp;KB</span></div><div class="y">应用程序</div><div class="d"><span class="l">2016-11-01&nbsp;20:04</span></div><div class="at"><span class="l">A</span></div></div>
<div class="r" style="top:383px"><svg viewBox="0 0 16 16"><path d="M2.6 .6L11.2 .6L14.4 3.8L14.4 15.4L2.6 15.4Z" fill="url(#gPg)" stroke="#86a4dc" stroke-width=".9"/><path d="M11.2 .6L11.2 3.8L14.4 3.8Z" fill="#a8c4f0"/><path d="M8.90 6.00L10.07 6.44L9.83 7.30L8.60 7.08L8.11 7.64L8.49 8.83L7.68 9.18L7.08 8.08L6.33 8.05L5.64 9.09L4.86 8.67L5.35 7.52L4.91 6.91L3.66 7.02L3.50 6.15L4.71 5.81L4.91 5.09L4.05 4.18L4.63 3.51L5.64 4.25L6.33 3.95L6.50 2.71L7.39 2.75L7.45 4.00L8.11 4.36L9.19 3.72L9.71 4.44L8.77 5.26Z" fill="#2fae28" stroke="#178a14" stroke-width="0.3"/><path d="M11.61 10.62L12.59 11.39L12.12 12.14L11.00 11.56L10.37 11.96L10.38 13.21L9.50 13.30L9.25 12.07L8.55 11.82L7.58 12.61L6.96 11.98L7.77 11.02L7.52 10.31L6.30 10.05L6.41 9.17L7.66 9.20L8.06 8.57L7.51 7.45L8.26 6.98L9.01 7.98L9.76 7.91L10.29 6.77L11.12 7.07L10.81 8.28L11.34 8.82L12.55 8.53L12.84 9.36L11.70 9.88Z" fill="#eba428" stroke="#c0800c" stroke-width="0.3"/><circle cx="6.8" cy="6" r=".9" fill="#d8f4d0"/><circle cx="9.6" cy="10" r=".9" fill="#fdeccc"/></svg><div class="n"><span class="l">amd.dll</span></div><div class="s"><span class="l">40&nbsp;KB</span></div><div class="y">应用程序扩展</div><div class="d"><span class="l">2016-10-10&nbsp;14:12</span></div><div class="at"><span class="l">A</span></div></div>
<div class="r" style="top:400px"><svg viewBox="0 0 16 16"><rect x="0" y="1" width="16" height="14" fill="#000"/><rect x="0" y="1" width="15" height="13" fill="#808080"/><rect x="1" y="2" width="14" height="12" fill="#c0c0c0"/><rect x="2" y="3" width="12" height="10" fill="#fff"/><rect x="2" y="3" width="12" height="2.4" fill="#0000a8"/><path d="M8.4 3.8h1.2v1h-1.2zM10.4 3.8h1.2v1h-1.2zM12.4 3.8h1.2v1h-1.2z" fill="#fff"/></svg><div class="n"><span class="l">exp1.exe</span></div><div class="s"><span class="l">47&nbsp;KB</span></div><div class="y">应用程序</div><div class="d"><span class="l">2016-09-13&nbsp;05:42</span></div><div class="at"><span class="l">A</span></div></div>
<div class="r" style="top:417px"><svg viewBox="0 0 16 16"><rect x="0" y="1" width="16" height="14" fill="#000"/><rect x="0" y="1" width="15" height="13" fill="#808080"/><rect x="1" y="2" width="14" height="12" fill="#c0c0c0"/><rect x="2" y="3" width="12" height="10" fill="#fff"/><rect x="2" y="3" width="12" height="2.4" fill="#0000a8"/><path d="M8.4 3.8h1.2v1h-1.2zM10.4 3.8h1.2v1h-1.2zM12.4 3.8h1.2v1h-1.2z" fill="#fff"/></svg><div class="n"><span class="l">exp2.exe</span></div><div class="s"><span class="l">54&nbsp;KB</span></div><div class="y">应用程序</div><div class="d"><span class="l">2016-09-13&nbsp;05:42</span></div><div class="at"><span class="l">A</span></div></div>
<div class="r" style="top:434px"><svg viewBox="0 0 16 16"><rect x="0" y="1" width="16" height="14" fill="#000"/><rect x="0" y="1" width="15" height="13" fill="#808080"/><rect x="1" y="2" width="14" height="12" fill="#c0c0c0"/><rect x="2" y="3" width="12" height="10" fill="#fff"/><rect x="2" y="3" width="12" height="2.4" fill="#0000a8"/><path d="M8.4 3.8h1.2v1h-1.2zM10.4 3.8h1.2v1h-1.2zM12.4 3.8h1.2v1h-1.2z" fill="#fff"/></svg><div class="n"><span class="l">exp.exe</span></div><div class="s"><span class="l">12&nbsp;KB</span></div><div class="y">应用程序</div><div class="d"><span class="l">2016-09-13&nbsp;05:42</span></div><div class="at"><span class="l">A</span></div></div>
<div class="r" style="top:451px"><svg viewBox="0 0 16 16"><path d="M2.6 .6L11.2 .6L14.4 3.8L14.4 15.4L2.6 15.4Z" fill="url(#gPg)" stroke="#86a4dc" stroke-width=".9"/><path d="M11.2 .6L11.2 3.8L14.4 3.8Z" fill="#a8c4f0"/><path d="M8.90 6.00L10.07 6.44L9.83 7.30L8.60 7.08L8.11 7.64L8.49 8.83L7.68 9.18L7.08 8.08L6.33 8.05L5.64 9.09L4.86 8.67L5.35 7.52L4.91 6.91L3.66 7.02L3.50 6.15L4.71 5.81L4.91 5.09L4.05 4.18L4.63 3.51L5.64 4.25L6.33 3.95L6.50 2.71L7.39 2.75L7.45 4.00L8.11 4.36L9.19 3.72L9.71 4.44L8.77 5.26Z" fill="#2fae28" stroke="#178a14" stroke-width="0.3"/><path d="M11.61 10.62L12.59 11.39L12.12 12.14L11.00 11.56L10.37 11.96L10.38 13.21L9.50 13.30L9.25 12.07L8.55 11.82L7.58 12.61L6.96 11.98L7.77 11.02L7.52 10.31L6.30 10.05L6.41 9.17L7.66 9.20L8.06 8.57L7.51 7.45L8.26 6.98L9.01 7.98L9.76 7.91L10.29 6.77L11.12 7.07L10.81 8.28L11.34 8.82L12.55 8.53L12.84 9.36L11.70 9.88Z" fill="#eba428" stroke="#c0800c" stroke-width="0.3"/><circle cx="6.8" cy="6" r=".9" fill="#d8f4d0"/><circle cx="9.6" cy="10" r=".9" fill="#fdeccc"/></svg><div class="n"><span class="l">lpk.dll</span></div><div class="s"><span class="l">8&nbsp;KB</span></div><div class="y">应用程序扩展</div><div class="d"><span class="l">2016-09-12&nbsp;17:42</span></div><div class="at"><span class="l">A</span></div></div>
<div class="r" style="top:468px"><svg viewBox="0 0 16 16"><rect width="16" height="16" fill="#000"/><rect width="16" height="8" fill="#0000f0"/><path d="M7 8L16 8L16 3Z" fill="#000"/><path d="M8 1.6L8 6M8 6L2.6 10.2M8 6L12.6 10.2" stroke="#fff" stroke-width="1.3" fill="none"/><text x="4.2" y="8.4" font-family="Liberation Sans,sans-serif" font-weight="bold" font-size="6.5" fill="#00f0f0">M</text><text x="0" y="15.6" font-family="Liberation Sans,sans-serif" font-weight="bold" font-size="6.5" fill="#00f0f0">F</text><text x="8" y="15.6" font-family="Liberation Sans,sans-serif" font-weight="bold" font-size="6.5" fill="#00f0f0">C</text></svg><div class="n"><span class="l">lwj.exe</span></div><div class="s"><span class="l">77&nbsp;KB</span></div><div class="y">应用程序</div><div class="d"><span class="l">2016-09-24&nbsp;10:05</span></div><div class="at"><span class="l">A</span></div></div>
<div class="r" style="top:485px"><svg viewBox="0 0 16 16"><path d="M2.6 .6L11.2 .6L14.4 3.8L14.4 15.4L2.6 15.4Z" fill="url(#gPg)" stroke="#86a4dc" stroke-width=".9"/><path d="M11.2 .6L11.2 3.8L14.4 3.8Z" fill="#a8c4f0"/><path d="M8.90 6.00L10.07 6.44L9.83 7.30L8.60 7.08L8.11 7.64L8.49 8.83L7.68 9.18L7.08 8.08L6.33 8.05L5.64 9.09L4.86 8.67L5.35 7.52L4.91 6.91L3.66 7.02L3.50 6.15L4.71 5.81L4.91 5.09L4.05 4.18L4.63 3.51L5.64 4.25L6.33 3.95L6.50 2.71L7.39 2.75L7.45 4.00L8.11 4.36L9.19 3.72L9.71 4.44L8.77 5.26Z" fill="#2fae28" stroke="#178a14" stroke-width="0.3"/><path d="M11.61 10.62L12.59 11.39L12.12 12.14L11.00 11.56L10.37 11.96L10.38 13.21L9.50 13.30L9.25 12.07L8.55 11.82L7.58 12.61L6.96 11.98L7.77 11.02L7.52 10.31L6.30 10.05L6.41 9.17L7.66 9.20L8.06 8.57L7.51 7.45L8.26 6.98L9.01 7.98L9.76 7.91L10.29 6.77L11.12 7.07L10.81 8.28L11.34 8.82L12.55 8.53L12.84 9.36L11.70 9.88Z" fill="#eba428" stroke="#c0800c" stroke-width="0.3"/><circle cx="6.8" cy="6" r=".9" fill="#d8f4d0"/><circle cx="9.6" cy="10" r=".9" fill="#fdeccc"/></svg><div class="n"><span class="l">Malizhen_s.dll</span></div><div class="s"><span class="l">242&nbsp;KB</span></div><div class="y">应用程序扩展</div><div class="d"><span class="l">2016-09-19&nbsp;11:02</span></div><div class="at"><span class="l">A</span></div></div>
<div class="r" style="top:502px"><svg viewBox="0 0 16 16"><path d="M2.5 .5L10.5 .5L13.5 3.5L13.5 15.5L2.5 15.5Z" fill="#fff" stroke="#303030" stroke-width=".9"/><path d="M10.5 .5L10.5 3.5L13.5 3.5" fill="none" stroke="#303030" stroke-width=".8"/><path d="M3.6 2.6h2v2.4h-2zM6.6 2.6h2v2.4h-2zM3.6 6h2v2.4h-2zM6.6 6h2v2.4h-2zM9.6 6h2v2.4h-2zM3.6 9.4h2v2.4h-2zM6.6 9.4h2v2.4h-2zM9.6 9.4h2v2.4h-2zM3.6 12.6h2v2h-2zM6.6 12.6h2v2h-2zM9.6 12.6h2v2h-2z" fill="#8c8c8c"/></svg><div class="n"><span class="l">MisTi1.exe</span></div><div class="s"><span class="l">68&nbsp;KB</span></div><div class="y">应用程序</div><div class="d"><span class="l">2016-11-16&nbsp;18:38</span></div><div class="at"><span class="l">A</span></div></div>
<div class="r" style="top:519px"><svg viewBox="0 0 16 16"><path d="M2.5 .5L10.5 .5L13.5 3.5L13.5 15.5L2.5 15.5Z" fill="#fff" stroke="#303030" stroke-width=".9"/><path d="M10.5 .5L10.5 3.5L13.5 3.5" fill="none" stroke="#303030" stroke-width=".8"/><path d="M3.6 2.6h2v2.4h-2zM6.6 2.6h2v2.4h-2zM3.6 6h2v2.4h-2zM6.6 6h2v2.4h-2zM9.6 6h2v2.4h-2zM3.6 9.4h2v2.4h-2zM6.6 9.4h2v2.4h-2zM9.6 9.4h2v2.4h-2zM3.6 12.6h2v2h-2zM6.6 12.6h2v2h-2zM9.6 12.6h2v2h-2z" fill="#8c8c8c"/></svg><div class="n"><span class="l">MisTi2.exe</span></div><div class="s"><span class="l">68&nbsp;KB</span></div><div class="y">应用程序</div><div class="d"><span class="l">2016-11-16&nbsp;18:38</span></div><div class="at"><span class="l">A</span></div></div>
<div class="r" style="top:536px"><svg viewBox="0 0 16 16"><path d="M2.5 .5L10.5 .5L13.5 3.5L13.5 15.5L2.5 15.5Z" fill="#fff" stroke="#303030" stroke-width=".9"/><path d="M10.5 .5L10.5 3.5L13.5 3.5" fill="none" stroke="#303030" stroke-width=".8"/><path d="M3.6 2.6h2v2.4h-2zM6.6 2.6h2v2.4h-2zM3.6 6h2v2.4h-2zM6.6 6h2v2.4h-2zM9.6 6h2v2.4h-2zM3.6 9.4h2v2.4h-2zM6.6 9.4h2v2.4h-2zM9.6 9.4h2v2.4h-2zM3.6 12.6h2v2h-2zM6.6 12.6h2v2h-2zM9.6 12.6h2v2h-2z" fill="#8c8c8c"/></svg><div class="n"><span class="l">MisTi.exe</span></div><div class="s"><span class="l">68&nbsp;KB</span></div><div class="y">应用程序</div><div class="d"><span class="l">2016-11-16&nbsp;18:38</span></div><div class="at"><span class="l">A</span></div></div>
<div class="r" style="top:553px"><svg viewBox="0 0 16 16"><rect x="0" y="1" width="16" height="14" fill="#000"/><rect x="0" y="1" width="15" height="13" fill="#808080"/><rect x="1" y="2" width="14" height="12" fill="#c0c0c0"/><rect x="2" y="3" width="12" height="10" fill="#fff"/><rect x="2" y="3" width="12" height="2.4" fill="#0000a8"/><path d="M8.4 3.8h1.2v1h-1.2zM10.4 3.8h1.2v1h-1.2zM12.4 3.8h1.2v1h-1.2z" fill="#fff"/></svg><div class="n"><span class="l">sldss.exe</span></div><div class="s"><span class="l">9&nbsp;KB</span></div><div class="y">应用程序</div><div class="d"><span class="l">2016-11-01&nbsp;20:05</span></div><div class="at"><span class="l">A</span></div></div>
<div class="r" style="top:570px"><svg viewBox="0 0 16 16"><rect x="0" y="1" width="16" height="14" fill="#000"/><rect x="0" y="1" width="15" height="13" fill="#808080"/><rect x="1" y="2" width="14" height="12" fill="#c0c0c0"/><rect x="2" y="3" width="12" height="10" fill="#fff"/><rect x="2" y="3" width="12" height="2.4" fill="#0000a8"/><path d="M8.4 3.8h1.2v1h-1.2zM10.4 3.8h1.2v1h-1.2zM12.4 3.8h1.2v1h-1.2z" fill="#fff"/></svg><div class="n"><span class="l">tan1.exe</span></div><div class="s"><span class="l">44&nbsp;KB</span></div><div class="y">应用程序</div><div class="d"><span class="l">2016-09-13&nbsp;05:42</span></div><div class="at"><span class="l">A</span></div></div>
<div class="r" style="top:587px"><svg viewBox="0 0 16 16"><rect x="0" y="1" width="16" height="14" fill="#000"/><rect x="0" y="1" width="15" height="13" fill="#808080"/><rect x="1" y="2" width="14" height="12" fill="#c0c0c0"/><rect x="2" y="3" width="12" height="10" fill="#fff"/><rect x="2" y="3" width="12" height="2.4" fill="#0000a8"/><path d="M8.4 3.8h1.2v1h-1.2zM10.4 3.8h1.2v1h-1.2zM12.4 3.8h1.2v1h-1.2z" fill="#fff"/></svg><div class="n"><span class="l">tan.exe</span></div><div class="s"><span class="l">34&nbsp;KB</span></div><div class="y">应用程序</div><div class="d"><span class="l">2016-09-13&nbsp;05:42</span></div><div class="at"><span class="l">A</span></div></div>
<div class="r" style="top:604px"><svg viewBox="0 0 16 16"><path d="M2.6 .6L11.2 .6L14.4 3.8L14.4 15.4L2.6 15.4Z" fill="url(#gPg)" stroke="#86a4dc" stroke-width=".9"/><path d="M11.2 .6L11.2 3.8L14.4 3.8Z" fill="#a8c4f0"/><path d="M8.90 6.00L10.07 6.44L9.83 7.30L8.60 7.08L8.11 7.64L8.49 8.83L7.68 9.18L7.08 8.08L6.33 8.05L5.64 9.09L4.86 8.67L5.35 7.52L4.91 6.91L3.66 7.02L3.50 6.15L4.71 5.81L4.91 5.09L4.05 4.18L4.63 3.51L5.64 4.25L6.33 3.95L6.50 2.71L7.39 2.75L7.45 4.00L8.11 4.36L9.19 3.72L9.71 4.44L8.77 5.26Z" fill="#2fae28" stroke="#178a14" stroke-width="0.3"/><path d="M11.61 10.62L12.59 11.39L12.12 12.14L11.00 11.56L10.37 11.96L10.38 13.21L9.50 13.30L9.25 12.07L8.55 11.82L7.58 12.61L6.96 11.98L7.77 11.02L7.52 10.31L6.30 10.05L6.41 9.17L7.66 9.20L8.06 8.57L7.51 7.45L8.26 6.98L9.01 7.98L9.76 7.91L10.29 6.77L11.12 7.07L10.81 8.28L11.34 8.82L12.55 8.53L12.84 9.36L11.70 9.88Z" fill="#eba428" stroke="#c0800c" stroke-width="0.3"/><circle cx="6.8" cy="6" r=".9" fill="#d8f4d0"/><circle cx="9.6" cy="10" r=".9" fill="#fdeccc"/></svg><div class="n"><span class="l">wemzzz.dll</span></div><div class="s"><span class="l">112&nbsp;KB</span></div><div class="y">应用程序扩展</div><div class="d"><span class="l">2016-11-01&nbsp;20:04</span></div><div class="at"><span class="l">A</span></div></div>
<div class="r" style="top:621px"><svg viewBox="0 0 16 16"><rect width="16" height="15.4" fill="#4c0a0a"/><path d="M12.6 2.6C9.6 2.6 8.6 4.4 7.8 6.4L10.6 6.4L10.6 8.2L7.2 8.2C6.2 10.8 5.2 12.8 2.8 12.8L2.8 11C4.2 11 4.8 9.6 5.6 7.6C6.8 4.6 8.2 .9 12.6 .9Z" fill="#fff"/></svg><div class="n"><span class="l">WINDOWS.exe</span></div><div class="s"><span class="l">204&nbsp;KB</span></div><div class="y">应用程序</div><div class="d"><span class="l">2016-10-29&nbsp;13:10</span></div><div class="at"><span class="l">A</span></div></div>
<div class="r" style="top:638px"><svg viewBox="0 0 16 16"><rect x="0" y="1" width="16" height="14" fill="#000"/><rect x="0" y="1" width="15" height="13" fill="#808080"/><rect x="1" y="2" width="14" height="12" fill="#c0c0c0"/><rect x="2" y="3" width="12" height="10" fill="#fff"/><rect x="2" y="3" width="12" height="2.4" fill="#0000a8"/><path d="M8.4 3.8h1.2v1h-1.2zM10.4 3.8h1.2v1h-1.2zM12.4 3.8h1.2v1h-1.2z" fill="#fff"/></svg><div class="n"><span class="l">y.exe</span></div><div class="s"><span class="l">72&nbsp;KB</span></div><div class="y">应用程序</div><div class="d"><span class="l">2016-09-10&nbsp;03:04</span></div><div class="at"><span class="l">A</span></div></div>
<div style="left:256px;top:196px;width:66px;height:15px;border:1px dotted #000"></div>
<div style="left:238px;top:269px;width:173px;height:394px;border:1px solid #f03c3c"></div>
<div style="left:778px;top:594px;width:60px;height:90px;background:#e8e6e0"></div>
<div style="left:779px;top:595px;width:60px;height:90px;background:#fff"></div>
<div style="left:780px;top:596px;width:60px;height:90px;background:#d4d0c8"></div>
<div style="left:782px;top:598px;width:60px;height:15px;background:#a0a0a8"></div>
<div class="t" style="left:784px;top:600px;color:#d4d0c8;font-weight:bold;letter-spacing:-0.2px">DU&nbsp;Meter</div>
<div style="left:784px;top:616px;width:60px;height:45px;background:#d8d8d8;border:1px solid #202020"></div>
<div style="left:784px;top:665px;width:60px;height:20px;background:#fff;border:1px solid #202020"></div>
</div></div></body></html>
